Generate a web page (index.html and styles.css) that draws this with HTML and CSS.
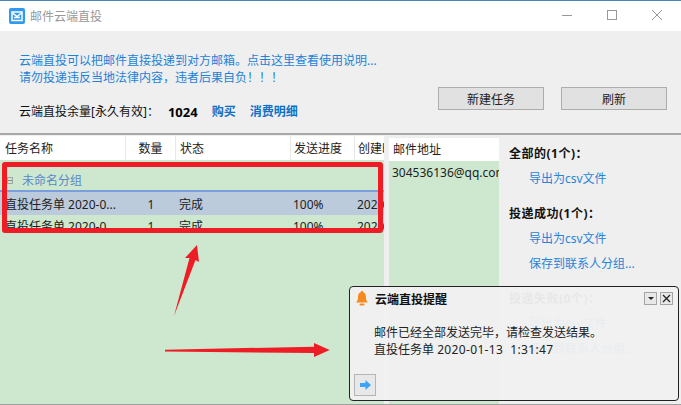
FILE: index.html
```html
<!DOCTYPE html>
<html lang="zh-CN">
<head>
  <meta charset="UTF-8">
  <title>邮件云端直投</title>
  <link rel="stylesheet" href="styles.css">
</head>
<body>
  <div class="window">
    <header class="titlebar">
      <svg class="app-icon" width="16" height="16" viewBox="0 0 16 16">
        <rect width="16" height="16" rx="2" fill="#2f9af0"/>
        <path d="M3 4h10v8.500H3z" fill="none" stroke="#fff" stroke-width="1.500"/>
        <path d="M3.500 5l4.500 3.500L12.500 5M5 9.500h6" fill="none" stroke="#fff" stroke-width="1.500"/>
      </svg>
      <span class="app-title">邮件云端直投</span>
      <div class="win-btns">
        <svg width="12" height="12" viewBox="0 0 12 12"><path d="M1 6.500h10" stroke="#999"/></svg>
        <svg width="12" height="12" viewBox="0 0 12 12"><rect x="1.500" y="1.500" width="9" height="9" fill="none" stroke="#999"/></svg>
        <svg width="12" height="12" viewBox="0 0 12 12"><path d="M1 1l10 10M11 1L1 11" stroke="#999"/></svg>
      </div>
    </header>

    <section class="top-panel">
      <div class="intro">
        <p class="notice">云端直投可以把邮件直接投递到对方邮箱。点击这里查看使用说明...</p>
        <p class="notice">请勿投递违反当地法律内容，违者后果自负！！！</p>
        <p class="quota">
          <span>云端直投余量[永久有效]：</span>
          <b class="quota-num">1024</b>
          <a class="strong-link">购买</a>
          <a class="strong-link">消费明细</a>
        </p>
      </div>
      <div class="actions">
        <button class="btn">新建任务</button>
        <button class="btn">刷新</button>
      </div>
    </section>

    <main class="content">
      <div class="list tasks">
        <div class="row head">
          <span class="c-name">任务名称</span>
          <span class="c-count">数量</span>
          <span class="c-state">状态</span>
          <span class="c-progress">发送进度</span>
          <span class="c-date">创建时间</span>
        </div>
        <div class="group"><i class="toggle"></i>未命名分组</div>
        <div class="row item selected">
          <span class="c-name">直投任务单 2020-0...</span>
          <span class="c-count">1</span>
          <span class="c-state">完成</span>
          <span class="c-progress">100%</span>
          <span class="c-date">2020-01-13</span>
        </div>
        <div class="row item">
          <span class="c-name">直投任务单 2020-0...</span>
          <span class="c-count">1</span>
          <span class="c-state">完成</span>
          <span class="c-progress">100%</span>
          <span class="c-date">2020-01-13</span>
        </div>
      </div>

      <div class="list mails">
        <div class="mail-head">邮件地址</div>
        <div class="mail-item">304536136@qq.com</div>
      </div>

      <aside class="side">
        <h4>全部的(1个)：</h4>
        <a class="side-link">导出为csv文件</a>
        <h4>投递成功(1个)：</h4>
        <a class="side-link">导出为csv文件</a>
        <a class="side-link">保存到联系人分组...</a>
        <h4>投递失败(0个)：</h4>
        <a class="side-link">导出为csv文件</a>
        <a class="side-link">保存到联系人分组...</a>
      </aside>
    </main>

    <div class="red-box"></div>
    <svg class="arrows" width="340" height="130" viewBox="0 0 340 130">
      <path d="M197 15L185 28h4.500L174 86l21.500-56 3.500 2z" fill="#ee1c25"/>
      <path d="M165 119.700l149-3V113l15.700 7L314 127v-4l-149-1.500z" fill="#ee1c25"/>
    </svg>

    <div class="toast">
      <div class="toast-head">
        <svg width="12" height="15" viewBox="0 0 12 15">
          <path d="M6 0c1 0 1.300.7 1.300 1.300C9.500 2 10 4 10 6.500c0 2.500.7 3.700 2 5H0c1.300-1.300 2-2.500 2-5C2 4 2.500 2 4.700 1.300 4.700.7 5 0 6 0z" fill="#f58a1f"/>
          <rect x="3.500" y="12.500" width="5" height="2" rx="1" fill="#f58a1f"/>
        </svg>
        <b class="toast-title">云端直投提醒</b>
        <button class="mini-btn"><i class="caret"></i></button>
        <button class="mini-btn">
          <svg width="9" height="9" viewBox="0 0 9 9"><path d="M1 1l7 7M8 1L1 8" stroke="#222" stroke-width="1.300"/></svg>
        </button>
      </div>
      <p class="toast-text">邮件已经全部发送完毕，请检查发送结果。</p>
      <p class="toast-text">直投任务单 <span class="stamp">2020-01-13&nbsp; 1:31:47</span></p>
      <button class="go-btn">
        <svg width="11" height="10" viewBox="0 0 11 10"><path d="M0 3h5.500V0L11 5 5.500 10V7H0z" fill="#3ba4f5"/></svg>
      </button>
    </div>
  </div>
</body>
</html>
```

FILE: styles.css
```css
* {
  box-sizing: border-box;
}

body {
  margin: 0;
  font-family: "Noto Sans", "Noto Sans CJK SC", sans-serif;
  font-size: 12px;
  color: #222;
}

.window {
  position: relative;
  width: 681px;
  height: 405px;
  display: flex;
  flex-direction: column;
  overflow: hidden;
  background: #efefef;
  border-top: 1px solid #4a86b8;
  border-bottom: 1px solid #a0a0a0;
}

.titlebar {
  flex: none;
  height: 30px;
  display: flex;
  align-items: center;
  padding-left: 9px;
  background: #fff;
}

.app-title {
  margin-left: 5px;
  color: #999;
}

.win-btns {
  margin-left: auto;
  margin-bottom: 2px;
  display: flex;
  gap: 33px;
  padding-right: 18px;
}

.top-panel {
  flex: none;
  height: 104px;
  display: flex;
  border-bottom: 2px solid #a8a8a8;
}

.intro {
  width: 438px;
  padding: 21px 0 0 19px;
}

.intro p {
  margin: 0;
  line-height: 17px;
  white-space: nowrap;
}

.notice {
  color: #1d82d8;
}

.intro .quota {
  margin-top: 17px;
  line-height: 18px;
  display: flex;
  color: #111;
}

.quota-num {
  margin-left: 9px;
  font-size: 13px;
  color: #000;
}

.strong-link {
  margin-left: 14px;
  font-weight: bold;
  color: #0f6fc6;
}

.actions {
  display: flex;
  gap: 17px;
  padding-top: 56px;
}

.btn {
  width: 106px;
  height: 23px;
  padding: 0;
  font: inherit;
  color: #222;
  background: #e1e1e1;
  border: 1px solid #adadad;
}

.content {
  flex: 1;
  display: flex;
  min-height: 0;
  padding-top: 1px;
}

.list {
  background: #cde8cf;
}

.tasks {
  width: 384px;
  overflow: hidden;
}

.row {
  display: flex;
  white-space: nowrap;
}

.head {
  height: 24px;
  line-height: 25px;
  background: #fff;
}

.head span {
  border-right: 1px solid #e8e8e8;
}

.head .c-date {
  border-right: 0;
}

.item {
  height: 24px;
  line-height: 24px;
}

.selected {
  height: 25px;
  line-height: 25px;
  background: #bccbdb;
  border-top: 2px solid #7b9fdc;
}

.c-name {
  flex: none;
  width: 126px;
  padding-left: 5px;
  overflow: hidden;
}

.c-count {
  flex: none;
  width: 50px;
  text-align: center;
}

.c-state {
  flex: none;
  width: 115px;
  padding-left: 4px;
}

.c-progress {
  flex: none;
  width: 64px;
  padding-left: 3px;
}

.c-date {
  flex: 1;
  padding-left: 3px;
  overflow: hidden;
}

.item .c-state {
  padding-left: 3px;
}

.item .c-progress,
.item .c-date {
  padding-left: 2px;
}

.group {
  height: 30px;
  padding: 10px 0 0 7px;
  display: flex;
  align-items: center;
  color: #5a86c8;
}

.toggle {
  width: 6px;
  height: 7px;
  margin-right: 9px;
  border: 1px solid #9aa8a0;
  background: linear-gradient(#7f8c85, #7f8c85) center / 4px 1px no-repeat;
}

.mails {
  width: 110px;
  margin: 2px 0 0 5px;
  overflow: hidden;
  white-space: nowrap;
}

.mail-head {
  height: 23px;
  line-height: 24px;
  padding-left: 4px;
  background: #fff;
}

.mail-item {
  padding: 2px 0 0 3px;
  line-height: 20px;
}

.side {
  flex: 1;
  padding: 9px 0 0 10px;
}

.side h4 {
  margin: 0 0 7px;
  font-size: 12px;
  line-height: 18px;
  letter-spacing: .5px;
  color: #111;
}

.side-link {
  display: block;
  margin-left: 20px;
  line-height: 18px;
  color: #2a83d6;
  white-space: nowrap;
}

.side-link + .side-link {
  margin-top: 7px;
}

.side-link + h4 {
  margin-top: 17px;
}

/* red marks on top of the screenshot */
.red-box {
  position: absolute;
  left: 2px;
  top: 161px;
  width: 381px;
  height: 71px;
  border: 5px solid #ee1c25;
  border-radius: 3px;
}

.arrows {
  position: absolute;
  left: 0;
  top: 229px;
}

.toast {
  position: absolute;
  left: 349px;
  top: 285px;
  width: 330px;
  height: 115px;
  padding: 3px 5px 0 5px;
  background: rgba(240, 240, 240, .96);
  border: 1px solid #222;
  border-radius: 4px;
}

.toast-head {
  display: flex;
  align-items: center;
  height: 17px;
  padding-left: 1px;
}

.toast-title {
  margin: 0 auto 0 7px;
  color: #111;
}

.mini-btn {
  width: 13px;
  height: 13px;
  margin-left: 3px;
  padding: 0;
  display: flex;
  align-items: center;
  justify-content: center;
  background: #e8e8e8;
  border: 1px solid #a5a5a5;
}

.caret {
  border: 3px solid transparent;
  border-top: 3px solid #222;
  border-bottom: 0;
}

.toast-text {
  margin: 0 0 0 19px;
  line-height: 17px;
  color: #222;
}

.toast-head + .toast-text {
  margin-top: 17px;
}

.stamp {
  letter-spacing: .35px;
}

.go-btn {
  display: flex;
  align-items: center;
  justify-content: center;
  width: 22px;
  height: 22px;
  margin-top: 16px;
  margin-left: -1px;
  padding: 0;
  background: #e8e8e8;
  border: 1px solid #b5b5b5;
}
```
